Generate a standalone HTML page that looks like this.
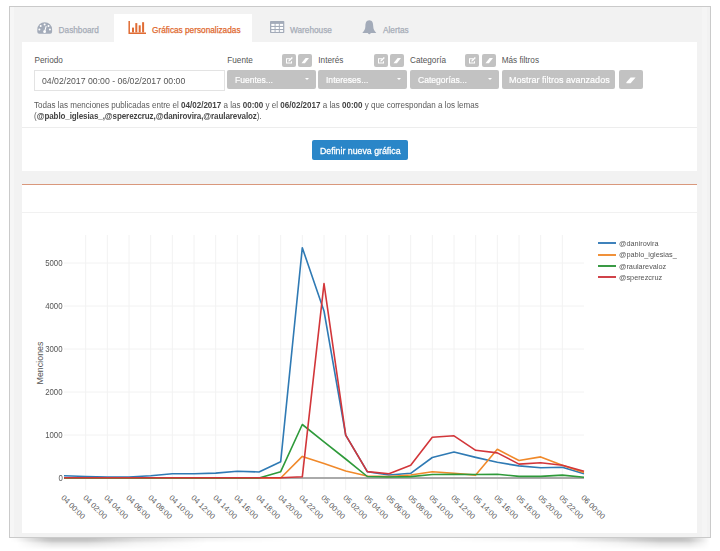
<!DOCTYPE html><html><head><meta charset="utf-8"><style>*{margin:0;padding:0;box-sizing:border-box}
html,body{width:720px;height:551px;overflow:hidden;background:#fff}
body{position:relative;font-family:"Liberation Sans",sans-serif;color:#555}
.abs{position:absolute;white-space:nowrap;line-height:1}
.sh{position:absolute;top:538px;left:10px;width:700px;height:5px;background:linear-gradient(to bottom,rgba(0,0,0,0.14) 0%,rgba(0,0,0,0.08) 50%,rgba(0,0,0,0) 100%);-webkit-mask-image:linear-gradient(to right,rgba(0,0,0,0) 0%,#000 5%,#000 12%,rgba(0,0,0,.5) 24%,rgba(0,0,0,0) 40%,rgba(0,0,0,0) 62%,rgba(0,0,0,.5) 78%,#000 90%,#000 96%,rgba(0,0,0,0) 100%)}
.sh2{position:absolute;top:538px;left:10px;width:700px;height:12px;background:linear-gradient(to bottom,rgba(0,0,0,0.12) 0%,rgba(0,0,0,0.16) 25%,rgba(0,0,0,0.08) 60%,rgba(0,0,0,0) 100%);-webkit-mask-image:linear-gradient(to right,rgba(0,0,0,0) 1%,#000 6%,#000 11%,rgba(0,0,0,.4) 18%,rgba(0,0,0,0) 28%,rgba(0,0,0,0) 80%,rgba(0,0,0,.4) 87%,#000 93%,#000 97%,rgba(0,0,0,0) 100%)}
#outer{position:absolute;left:9px;top:6px;width:702px;height:532px;border:1px solid #cacaca;background:#f2f2f2}
.panel{position:absolute;left:22px;width:675px;background:#fff}
.tabtxt{position:absolute;font-size:8.25px;color:#a6acb7;top:27.3px;-webkit-text-stroke:0.25px currentColor}
.lbl{font-size:8.2px;color:#555;top:56.6px}
.dd{position:absolute;white-space:nowrap;top:70px;height:19px;background:#c2c2c2;border-radius:2px;color:#fff;font-size:9.2px;line-height:1}
.dd span{position:absolute;left:8px;top:5.6px;transform:scaleX(0.93);transform-origin:0 0;-webkit-text-stroke:0.2px #fff}
.dd i{position:absolute;top:8px;width:0;height:0;border-left:2.5px solid transparent;border-right:2.5px solid transparent;border-top:2.5px solid #fff}
.sb{position:absolute;top:53.5px;width:14px;height:13.3px;background:#c2c2c2;border-radius:2px}
.sb svg{position:absolute;left:0;top:0}
.desc{font-size:9.2px;color:#5a5a5a;left:34px;transform:scaleX(0.875);transform-origin:0 0}
.desc b{color:#444}
.ylab{font-size:8.8px;color:#555;text-align:right;transform:scaleX(0.89);transform-origin:100% 0}
.ytitle{font-size:8.9px;color:#555;left:39.75px;top:362.5px;transform:translate(-50%,-50%) rotate(-90deg);transform-origin:center}
.xlab{font-size:7.7px;color:#555;transform:rotate(45deg);transform-origin:0 0}
.leg{font-size:7.7px;color:#555;transform:scaleX(0.95);transform-origin:0 0}
</style></head><body>
<div class="sh"></div><div class="sh2"></div>
<div id="outer"></div>
<div class="abs" style="left:10px;top:7px;width:4px;height:530px;background:#f6f6f6"></div>
<div class="abs" style="left:702px;top:7px;width:5px;height:530px;background:#f5f5f5"></div>
<div class="abs" style="left:114px;top:14px;width:138px;height:29px;background:#fff"></div>
<svg class="abs" style="left:37px;top:22px" width="16" height="12" viewBox="0 0 16 12">
<path d="M0.3 7.6 A7.4 7.4 0 0 1 15.1 7.6 L15.1 9.8 Q15.1 11.7 13.2 11.7 L2.2 11.7 Q0.3 11.7 0.3 9.8 Z" fill="#a3abb9"/>
<circle cx="3.7" cy="3.9" r="1" fill="#fff"/><circle cx="7.6" cy="2.4" r="1" fill="#fff"/><circle cx="11.5" cy="3.9" r="1" fill="#fff"/>
<circle cx="2.4" cy="7.6" r="1" fill="#fff"/><circle cx="12.9" cy="7.6" r="1" fill="#fff"/>
<path d="M7.6 9.6 L9.2 4.2" stroke="#fff" stroke-width="1.1"/><circle cx="7.6" cy="9.7" r="1.4" fill="#fff"/></svg>
<div class="tabtxt abs" style="left:58.6px">Dashboard</div>
<svg class="abs" style="left:128px;top:21px" width="19" height="14" viewBox="0 0 19 14">
<path d="M1.2 0 V12.2 H18" stroke="#e06c34" stroke-width="1.5" fill="none"/>
<rect x="4" y="6.6" width="2" height="4.8" fill="#e06c34"/><rect x="7.3" y="2.1" width="2" height="9.3" fill="#e06c34"/>
<rect x="10.7" y="4.3" width="2" height="7.1" fill="#e06c34"/><rect x="14.1" y="1.2" width="2" height="10.2" fill="#e06c34"/></svg>
<div class="tabtxt abs" style="left:152px;color:#e0692f">Gráficas personalizadas</div>
<svg class="abs" style="left:270px;top:21px" width="15" height="12" viewBox="0 0 15 12">
<rect x="0" y="0" width="14.3" height="12" fill="#a3abb9" rx="0.8"/><g fill="#fff">
<rect x="1.3" y="2.9" width="3.3" height="2"/><rect x="5.55" y="2.9" width="3.3" height="2"/><rect x="9.8" y="2.9" width="3.3" height="2"/>
<rect x="1.3" y="6" width="3.3" height="2"/><rect x="5.55" y="6" width="3.3" height="2"/><rect x="9.8" y="6" width="3.3" height="2"/>
<rect x="1.3" y="9.1" width="3.3" height="1.8"/><rect x="5.55" y="9.1" width="3.3" height="1.8"/><rect x="9.8" y="9.1" width="3.3" height="1.8"/></g></svg>
<div class="tabtxt abs" style="left:290px">Warehouse</div>
<svg class="abs" style="left:362px;top:20px" width="15" height="15" viewBox="0 0 15 15">
<path d="M7.3 0.2 C4.2 0.2 3.4 3 3.4 6 C3.4 9.4 2 11 0.3 12.9 L14.3 12.9 C12.6 11 11.2 9.4 11.2 6 C11.2 3 10.4 0.2 7.3 0.2Z" fill="#a3abb9"/>
<path d="M5.8 13 Q7.3 15.4 8.8 13Z" fill="#a3abb9"/></svg>
<div class="tabtxt abs" style="left:383px">Alertas</div>
<div class="panel" style="top:42px;height:129px"></div>
<div class="abs lbl" style="left:34.6px">Periodo</div>
<div class="abs" style="left:34px;top:70px;width:191px;height:21px;border:1px solid #e3e3e3;background:#fff"></div>
<div class="abs" style="left:42px;top:76px;font-size:9.5px;color:#555;transform:scaleX(0.916);transform-origin:0 0">04/02/2017 00:00 - 06/02/2017 00:00</div>
<div class="abs lbl" style="left:227.3px">Fuente</div>
<div class="sb" style="left:282.3px"><svg width="14" height="13" viewBox="0 0 14 13"><path d="M4 4.2H8.2V5.2H5V8.4H9V7.2H10V9.4H4Z" fill="#fff"/><path d="M6.2 7.6 L6.6 6.2 L9.8 3 L10.8 4 L7.6 7.2Z" fill="#fff"/></svg></div><div class="sb" style="left:298.3px"><svg width="14" height="13" viewBox="0 0 14 13"><path d="M3.5 9.2 L7.6 4 H11 L6.9 9.2Z" fill="#fff"/></svg></div>
<div class="dd" style="left:227px;width:89px"><span>Fuentes...</span><i style="left:77.5px"></i></div>
<div class="abs lbl" style="left:318.3px">Interés</div>
<div class="sb" style="left:373.5px"><svg width="14" height="13" viewBox="0 0 14 13"><path d="M4 4.2H8.2V5.2H5V8.4H9V7.2H10V9.4H4Z" fill="#fff"/><path d="M6.2 7.6 L6.6 6.2 L9.8 3 L10.8 4 L7.6 7.2Z" fill="#fff"/></svg></div><div class="sb" style="left:390.3px"><svg width="14" height="13" viewBox="0 0 14 13"><path d="M3.5 9.2 L7.6 4 H11 L6.9 9.2Z" fill="#fff"/></svg></div>
<div class="dd" style="left:318px;width:89px"><span>Intereses...</span><i style="left:78.5px"></i></div>
<div class="abs lbl" style="left:410px">Categoría</div>
<div class="sb" style="left:465px"><svg width="14" height="13" viewBox="0 0 14 13"><path d="M4 4.2H8.2V5.2H5V8.4H9V7.2H10V9.4H4Z" fill="#fff"/><path d="M6.2 7.6 L6.6 6.2 L9.8 3 L10.8 4 L7.6 7.2Z" fill="#fff"/></svg></div><div class="sb" style="left:481.8px"><svg width="14" height="13" viewBox="0 0 14 13"><path d="M3.5 9.2 L7.6 4 H11 L6.9 9.2Z" fill="#fff"/></svg></div>
<div class="dd" style="left:409.5px;width:89px"><span>Categorías...</span><i style="left:78.5px"></i></div>
<div class="abs lbl" style="left:501.7px">Más filtros</div>
<div class="dd" style="left:501.7px;width:113.6px"><span style="transform:scaleX(0.93);transform-origin:0 0;font-size:9.7px;left:7.5px;top:5.3px">Mostrar filtros avanzados</span></div>
<div class="dd" style="left:619px;width:24px"><svg style="position:absolute;left:0;top:0" width="24" height="19" viewBox="0 0 24 19"><path d="M7.5 13.2 Q7 12.6 7.6 12 L11.6 7.6 H16.6 L11.6 13.2Z" fill="#fff"/></svg></div>
<div class="abs desc" style="top:101px">Todas las menciones publicadas entre el <b>04/02/2017</b> a las <b>00:00</b> y el <b>06/02/2017</b> a las <b>00:00</b> y que correspondan a los lemas</div>
<div class="abs desc" style="top:111.8px">(<b style="letter-spacing:-0.12px">@pablo_iglesias_,@sperezcruz,@danirovira,@raularevaloz</b>).</div>
<div class="abs" style="left:22px;top:126.5px;width:675px;height:1px;background:#ededed"></div>
<div class="abs" style="left:311.5px;top:140px;width:96px;height:19.7px;background:#2a86c8;border-radius:2px"></div>
<div class="abs" style="left:319.8px;top:145.8px;font-size:9.6px;color:#fff;-webkit-text-stroke:0.3px #fff;transform:scaleX(0.915);transform-origin:0 0">Definir nueva gráfica</div>
<div class="panel" style="top:184px;height:349px;border-top:1px solid #d9987c"></div>
<div class="abs" style="left:22px;top:211.5px;width:675px;height:1px;background:#f1f1f1"></div>
<svg class="abs" style="left:0;top:0" width="720" height="551">
<path d="M85.7 235V490 M107.3 235V490 M129.0 235V490 M150.7 235V490 M172.3 235V490 M194.0 235V490 M215.7 235V490 M237.3 235V490 M259.0 235V490 M280.7 235V490 M302.3 235V490 M324.0 235V490 M345.7 235V490 M367.3 235V490 M389.0 235V490 M410.7 235V490 M432.3 235V490 M454.0 235V490 M475.7 235V490 M497.3 235V490 M519.0 235V490 M540.7 235V490 M562.3 235V490 M64 435.0H584 M64 392.0H584 M64 349.0H584 M64 306.0H584 M64 263.0H584" stroke="#f2f2f2" stroke-width="1" fill="none"/>
<path d="M64 478H584" stroke="#aaaaaa" stroke-width="2" fill="none"/>
<polyline points="64.0,475.8 85.7,476.5 107.3,477.0 129.0,477.0 150.7,475.8 172.3,473.8 194.0,473.8 215.7,473.1 237.3,471.2 259.0,472.0 280.7,461.7 302.3,247.7 324.0,311.0 345.7,435.1 367.3,471.7 389.0,475.0 410.7,473.3 432.3,457.5 454.0,452.0 475.7,457.4 497.3,462.3 519.0,465.9 540.7,467.7 562.3,467.3 584.0,473.7" stroke="#2f7ab4" stroke-width="1.6" fill="none" stroke-linejoin="round"/>
<polyline points="64.0,478.0 85.7,478.0 107.3,478.0 129.0,478.0 150.7,478.0 172.3,478.0 194.0,478.0 215.7,478.0 237.3,478.0 259.0,478.0 280.7,478.0 302.3,456.4 324.0,463.5 345.7,471.0 367.3,476.0 389.0,476.5 410.7,475.0 432.3,471.7 454.0,473.3 475.7,475.1 497.3,449.3 519.0,460.5 540.7,456.9 562.3,465.2 584.0,472.4" stroke="#f0892a" stroke-width="1.6" fill="none" stroke-linejoin="round"/>
<polyline points="64.0,478.0 85.7,478.0 107.3,478.0 129.0,478.0 150.7,478.0 172.3,478.0 194.0,478.0 215.7,478.0 237.3,478.0 259.0,478.0 280.7,471.7 302.3,424.5 324.0,441.8 345.7,459.0 367.3,476.5 389.0,477.0 410.7,476.6 432.3,474.5 454.0,474.2 475.7,474.5 497.3,474.2 519.0,476.4 540.7,476.4 562.3,475.1 584.0,477.3" stroke="#2e9a3a" stroke-width="1.6" fill="none" stroke-linejoin="round"/>
<polyline points="64.0,477.8 85.7,477.8 107.3,477.8 129.0,477.8 150.7,477.8 172.3,477.8 194.0,477.8 215.7,477.8 237.3,477.8 259.0,477.8 280.7,477.8 302.3,476.8 324.0,283.6 345.7,435.1 367.3,471.6 389.0,473.7 410.7,465.3 432.3,437.2 454.0,435.8 475.7,450.3 497.3,452.9 519.0,464.1 540.7,462.8 562.3,465.2 584.0,471.3" stroke="#d2363a" stroke-width="1.6" fill="none" stroke-linejoin="round"/>
</svg>
<div class="abs ylab" style="right:657.3px;top:474.1px">0</div>
<div class="abs ylab" style="right:657.3px;top:431.1px">1000</div>
<div class="abs ylab" style="right:657.3px;top:388.1px">2000</div>
<div class="abs ylab" style="right:657.3px;top:345.1px">3000</div>
<div class="abs ylab" style="right:657.3px;top:302.1px">4000</div>
<div class="abs ylab" style="right:657.3px;top:259.1px">5000</div>
<div class="abs ytitle">Menciones</div>
<div class="abs xlab" style="left:65.0px;top:493.5px">04 00:00</div>
<div class="abs xlab" style="left:86.7px;top:493.5px">04 02:00</div>
<div class="abs xlab" style="left:108.3px;top:493.5px">04 04:00</div>
<div class="abs xlab" style="left:130.0px;top:493.5px">04 06:00</div>
<div class="abs xlab" style="left:151.7px;top:493.5px">04 08:00</div>
<div class="abs xlab" style="left:173.3px;top:493.5px">04 10:00</div>
<div class="abs xlab" style="left:195.0px;top:493.5px">04 12:00</div>
<div class="abs xlab" style="left:216.7px;top:493.5px">04 14:00</div>
<div class="abs xlab" style="left:238.3px;top:493.5px">04 16:00</div>
<div class="abs xlab" style="left:260.0px;top:493.5px">04 18:00</div>
<div class="abs xlab" style="left:281.7px;top:493.5px">04 20:00</div>
<div class="abs xlab" style="left:303.3px;top:493.5px">04 22:00</div>
<div class="abs xlab" style="left:325.0px;top:493.5px">05 00:00</div>
<div class="abs xlab" style="left:346.7px;top:493.5px">05 02:00</div>
<div class="abs xlab" style="left:368.3px;top:493.5px">05 04:00</div>
<div class="abs xlab" style="left:390.0px;top:493.5px">05 06:00</div>
<div class="abs xlab" style="left:411.7px;top:493.5px">05 08:00</div>
<div class="abs xlab" style="left:433.3px;top:493.5px">05 10:00</div>
<div class="abs xlab" style="left:455.0px;top:493.5px">05 12:00</div>
<div class="abs xlab" style="left:476.7px;top:493.5px">05 14:00</div>
<div class="abs xlab" style="left:498.3px;top:493.5px">05 16:00</div>
<div class="abs xlab" style="left:520.0px;top:493.5px">05 18:00</div>
<div class="abs xlab" style="left:541.7px;top:493.5px">05 20:00</div>
<div class="abs xlab" style="left:563.3px;top:493.5px">05 22:00</div>
<div class="abs xlab" style="left:585.0px;top:493.5px">06 00:00</div>
<div class="abs" style="left:597.6px;top:242px;width:18px;height:2px;background:#3f82bb"></div>
<div class="abs leg" style="left:618.6px;top:239.8px">@danirovira</div>
<div class="abs" style="left:597.6px;top:254px;width:18px;height:2px;background:#f0913a"></div>
<div class="abs leg" style="left:618.6px;top:251.1px">@pablo_iglesias_</div>
<div class="abs" style="left:597.6px;top:265px;width:18px;height:2px;background:#3a9a45"></div>
<div class="abs leg" style="left:618.6px;top:262.5px">@raularevaloz</div>
<div class="abs" style="left:597.6px;top:276px;width:18px;height:2px;background:#d0434a"></div>
<div class="abs leg" style="left:618.6px;top:273.9px">@sperezcruz</div>
</body></html>
